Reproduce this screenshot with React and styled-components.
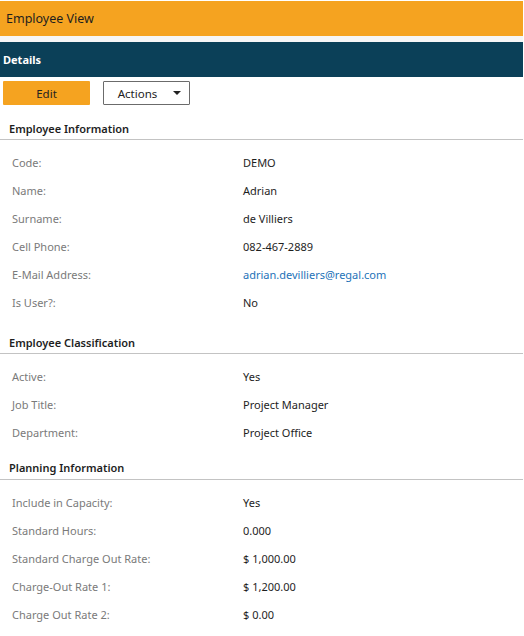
import React from "react";
import styled, { createGlobalStyle } from "styled-components";

const Global = createGlobalStyle`
  html, body { margin: 0; padding: 0; background: #fff; }
  body { font-family: "Noto Sans", "Open Sans", sans-serif; font-size: 11px; color: #222; }
`;

const Page = styled.div`
  width: 523px;
  padding-top: 1px;
`;

const TitleBar = styled.div`
  height: 35px;
  background: #f5a320;
  display: flex;
  align-items: center;
  padding-left: 6px;
  font-size: 12.5px;
  color: #1e1e1e;
`;

const Spacer = styled.div`
  height: 6px;
  background: #f6f6f6;
`;

const SubBar = styled.div`
  height: 35px;
  background: #0b4058;
  display: flex;
  align-items: center;
  padding-left: 3px;
  color: #fff;
  font-weight: 700;
  font-size: 11px;
`;

const Toolbar = styled.div`
  display: flex;
  gap: 13px;
  padding: 4px 0 0 3px;
`;

const Button = styled.button`
  width: 87px;
  height: 24px;
  box-sizing: border-box;
  font-family: inherit;
  font-size: 11.5px;
  color: #222;
  background: ${(p) => (p.$primary ? "#f5a320" : "#fff")};
  border: ${(p) => (p.$primary ? "none" : "1px solid #6b6b6b")};
  border-radius: 1px;
  display: flex;
  align-items: center;
  justify-content: center;
  gap: 16px;
  padding: 0 0 0 ${(p) => (p.$primary ? "0" : "6px")};
  cursor: pointer;
`;

const Caret = styled.span`
  width: 0;
  height: 0;
  border-left: 4px solid transparent;
  border-right: 4px solid transparent;
  border-top: 4px solid #222;
`;

const Section = styled.section`
  margin-top: ${(p) => p.$top}px;
`;

const SectionTitle = styled.div`
  height: ${(p) => p.$h}px;
  display: flex;
  align-items: center;
  padding-left: 9px;
  font-weight: 600;
  color: #1e1e1e;
  border-bottom: 1px solid #c3c3c3;
  margin-bottom: 8px;
`;

const Row = styled.div`
  display: grid;
  grid-template-columns: 231px 1fr;
  height: 28px;
  align-items: center;
  padding-left: 12px;
`;

const Label = styled.div`
  color: #7a7a7a;
`;

const Value = styled.div`
  color: ${(p) => (p.$link ? "#1d72b8" : "#1e1e1e")};
`;

const sections = [
  {
    title: "Employee Information",
    top: 12,
    h: 22,
    rows: [
      ["Code:", "DEMO"],
      ["Name:", "Adrian"],
      ["Surname:", "de Villiers"],
      ["Cell Phone:", "082-467-2889"],
      ["E-Mail Address:", "adrian.devilliers@regal.com", true],
      ["Is User?:", "No"],
    ],
  },
  {
    title: "Employee Classification",
    top: 15,
    h: 22,
    rows: [
      ["Active:", "Yes"],
      ["Job Title:", "Project Manager"],
      ["Department:", "Project Office"],
    ],
  },
  {
    title: "Planning Information",
    top: 10,
    h: 23,
    rows: [
      ["Include in Capacity:", "Yes"],
      ["Standard Hours:", "0.000"],
      ["Standard Charge Out Rate:", "$ 1,000.00"],
      ["Charge-Out Rate 1:", "$ 1,200.00"],
      ["Charge Out Rate 2:", "$ 0.00"],
    ],
  },
];

export default function App() {
  return (
    <Page>
      <Global />
      <TitleBar>Employee View</TitleBar>
      <Spacer />
      <SubBar>Details</SubBar>
      <Toolbar>
        <Button $primary>Edit</Button>
        <Button>
          Actions <Caret />
        </Button>
      </Toolbar>
      {sections.map((s) => (
        <Section key={s.title} $top={s.top}>
          <SectionTitle $h={s.h}>{s.title}</SectionTitle>
          {s.rows.map(([l, v, link]) => (
            <Row key={l}>
              <Label>{l}</Label>
              <Value $link={link}>{v}</Value>
            </Row>
          ))}
        </Section>
      ))}
    </Page>
  );
}
